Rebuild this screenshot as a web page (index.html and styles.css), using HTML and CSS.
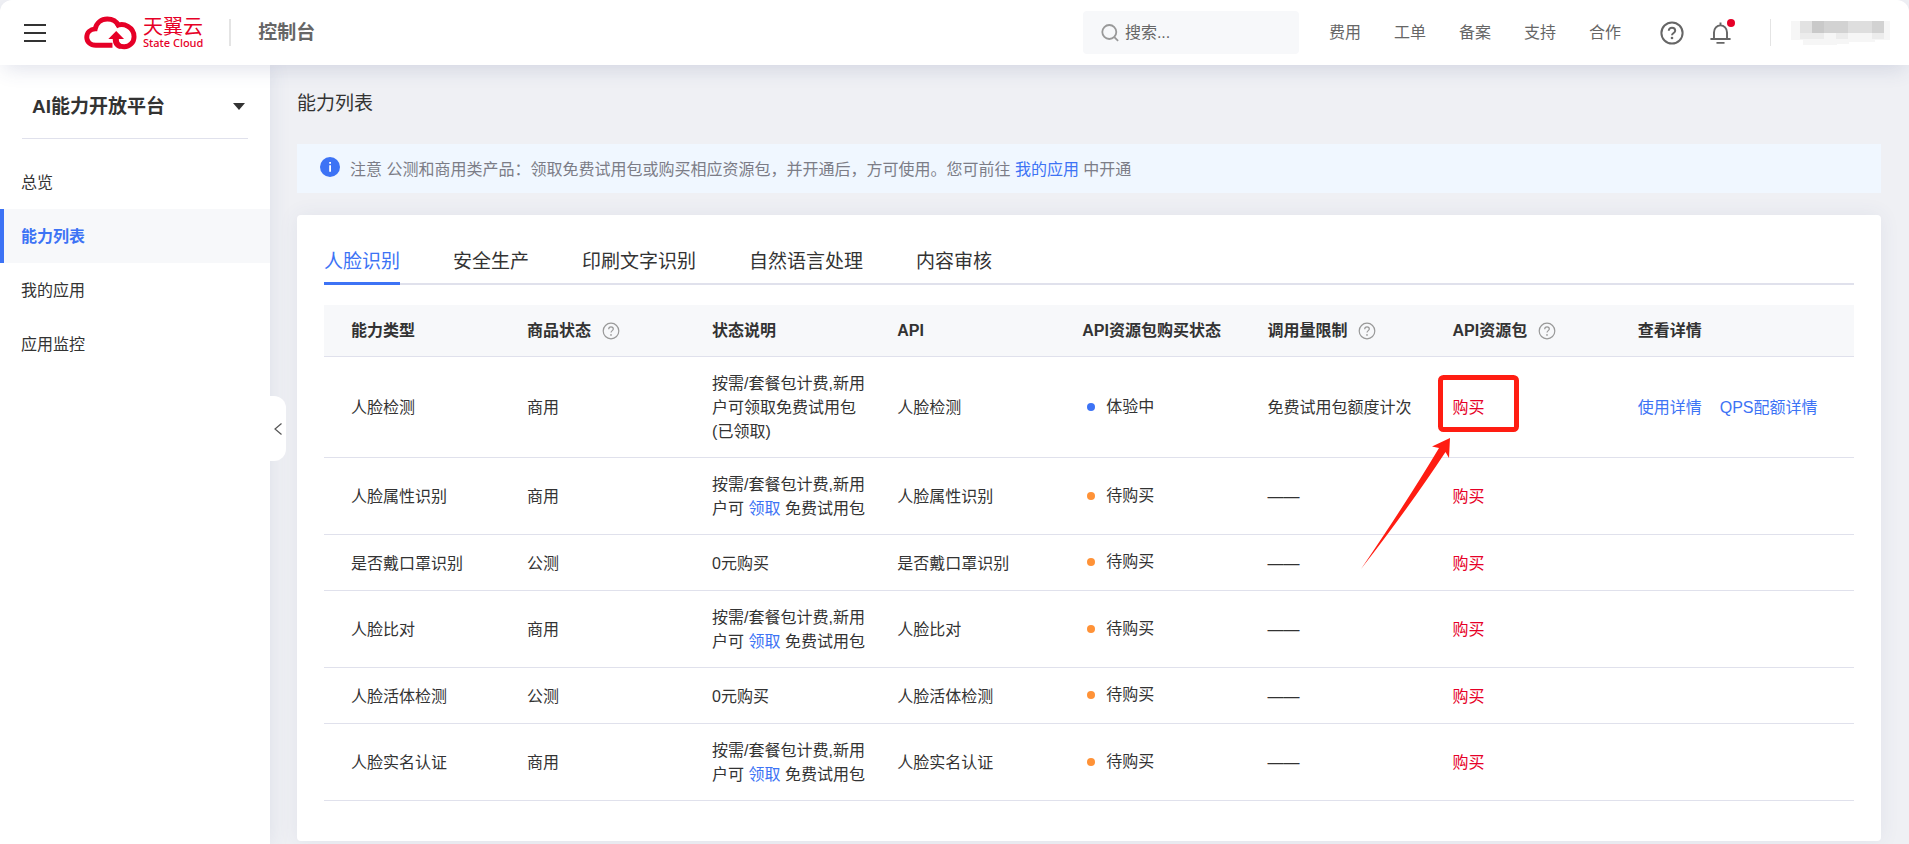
FILE: index.html
```html
<!DOCTYPE html>
<html lang="zh-CN">
<head>
<meta charset="utf-8">
<meta name="viewport" content="width=device-width, initial-scale=1">
<title>能力列表 - 控制台</title>
<link rel="stylesheet" href="styles.css">
</head>
<body>
<svg class="sprite" aria-hidden="true">
  <symbol id="icon-question" viewBox="0 0 18 18">
    <circle cx="9" cy="9" r="7.8" fill="none" stroke="currentColor" stroke-width="1.2"/>
    <path d="M6.7 7.2C6.7 5.7 7.7 4.9 9 4.9s2.3.8 2.3 2.1c0 1.600-2.300 1.700-2.300 3.600" fill="none" stroke="currentColor" stroke-width="1.2"/>
    <circle cx="9" cy="12.900" r=".85" fill="currentColor"/>
  </symbol>
</svg>
<header class="header">
  <button class="menu-button" type="button" aria-label="菜单"><span></span><span></span><span></span></button>
  <a class="logo" href="#">
    <svg class="logo-mark" viewBox="0 0 54 34" aria-hidden="true">
      <path d="M29 29.500H12C6.500 29.500 2.800 26 2.800 21.400c0-4.800 3.600-8.200 8.600-8.600C12.800 6.400 17.700 2.700 23.700 2.700c5.600 0 9.600 2.700 11.800 6.900" fill="none" stroke="currentColor" stroke-width="5"/>
      <path d="M32.500 10c8-4.500 18.500 1.500 18.500 10.700 0 5.800-4.400 10.300-10 10.300-5 0-8.600-3.300-8.600-8.500" fill="none" stroke="currentColor" stroke-width="5"/>
      <path d="M32.800 15l8 8.200h-5.400c0 3 1.300 5 4 6l-2.500 4.200c-2.900-.8-5-2.300-6.200-4.200-1-1.700-1.400-3.700-1.400-6h-4.500z" fill="currentColor"/>
    </svg>
    <span class="logo-text"><span class="logo-cn">天翼云</span><span class="logo-en">State Cloud</span></span>
  </a>
  <span class="divider"></span>
  <a class="console" href="#">控制台</a>
  <label class="search">
    <svg viewBox="0 0 18 18" aria-hidden="true"><circle cx="8.300" cy="8" r="7" fill="none" stroke="currentColor" stroke-width="1.800"/><path d="M13.300 13.200l3.800 3.600" stroke="currentColor" stroke-width="1.800"/></svg>
    <input type="search" placeholder="搜索..." aria-label="搜索">
  </label>
  <nav class="top-nav">
    <a href="#">费用</a><a href="#">工单</a><a href="#">备案</a><a href="#">支持</a><a href="#">合作</a>
  </nav>
  <button class="tool help" type="button" aria-label="帮助">
    <svg viewBox="0 0 24 24"><circle cx="12" cy="12" r="10.600" fill="none" stroke="currentColor" stroke-width="2"/><path d="M8.800 9.800C8.800 7.900 10.200 6.800 12 6.800s3.200 1.100 3.200 2.900c0 2.200-3.200 2.300-3.200 4.600" fill="none" stroke="currentColor" stroke-width="2"/><circle cx="12" cy="17" r="1.300" fill="currentColor"/></svg>
  </button>
  <button class="tool bell" type="button" aria-label="消息">
    <svg viewBox="0 0 24 24"><path d="M5.200 18.200V11.500a6.800 7.500 0 0 1 13.600 0v6.700M1.500 18.200h21M12 1v3M7.800 22.300h8.400" fill="none" stroke="currentColor" stroke-width="2"/></svg>
    <span class="badge"></span>
  </button>
  <span class="divider thin"></span>
  <svg class="account" viewBox="0 0 99 24" aria-label="账户" shape-rendering="crispEdges">
    <path fill="#f6f6f6" d="M0 0h99v19H84v2H58v2H46v1H12v-5H0z"/>
    <path fill="#e2e2e2" d="M9 0h12v12H9z"/><path fill="#c9c9c9" d="M21 0h12v12H21z"/>
    <path fill="#dedede" d="M33 0h60v12H33z"/><path fill="#d2d2d2" d="M33 0h24v12H33zM81 0h12v12H81z"/>
    <path fill="#ececec" d="M9 12h24v6H9zM45 12h12v6H45zM81 12h12v6H81z"/>
  </svg>
</header>
<div class="layout">
  <aside class="sidebar">
    <button class="product" type="button">AI能力开放平台<span class="caret"></span></button>
    <nav class="side-nav">
      <a href="#">总览</a>
      <a class="active" href="#" aria-current="page">能力列表</a>
      <a href="#">我的应用</a>
      <a href="#">应用监控</a>
    </nav>
    <button class="collapse" type="button" aria-label="收起"><svg viewBox="0 0 8 12"><path d="M7.500.5L1 6l6.500 5.500" fill="none" stroke="currentColor" stroke-width="1.200"/></svg></button>
  </aside>
  <main class="main">
    <h1>能力列表</h1>
    <div class="notice">
      <svg viewBox="0 0 20 20" aria-hidden="true"><circle cx="10" cy="10" r="10" fill="#3d73f5"/><path d="M9.200 8.200h1.800v6.600H9.200zM9.200 5h1.800v1.800H9.200z" fill="#fff"/></svg>
      <p>注意 公测和商用类产品：领取免费试用包或购买相应资源包，并开通后，方可使用。您可前往 <a href="#">我的应用</a> 中开通</p>
    </div>
    <section class="card">
      <div class="tabs" role="tablist">
        <button class="active" type="button" role="tab" aria-selected="true">人脸识别</button>
        <button type="button" role="tab">安全生产</button>
        <button type="button" role="tab">印刷文字识别</button>
        <button type="button" role="tab">自然语言处理</button>
        <button type="button" role="tab">内容审核</button>
      </div>
      <table>
        <colgroup><col class="col-type"><col class="col"><col class="col"><col class="col"><col class="col"><col class="col"><col class="col"><col></colgroup>
        <thead>
          <tr>
            <th>能力类型</th>
            <th><span class="hint">商品状态<svg><use href="#icon-question"/></svg></span></th>
            <th>状态说明</th>
            <th>API</th>
            <th>API资源包购买状态</th>
            <th><span class="hint">调用量限制<svg><use href="#icon-question"/></svg></span></th>
            <th><span class="hint">API资源包<svg><use href="#icon-question"/></svg></span></th>
            <th>查看详情</th>
          </tr>
        </thead>
        <tbody>
          <tr>
            <td>人脸检测</td><td>商用</td><td>按需/套餐包计费,新用户可领取免费试用包(已领取)</td><td>人脸检测</td>
            <td><span class="status trial">体验中</span></td><td>免费试用包额度计次</td>
            <td class="marked"><a class="buy" href="#">购买</a>
              <svg class="marker" viewBox="0 0 160 196" aria-hidden="true">
                <rect x="80.500" y="3.500" width="76" height="52" rx="3" fill="none" stroke="#ff1d12" stroke-width="5"/>
                <path d="M90 64L72 72.500l7 1.500Q48 126 1 195Q50 132 85.500 78l3.500 6z" fill="#ff1d12"/>
              </svg></td>
            <td><span class="links"><a href="#">使用详情</a><a href="#">QPS配额详情</a></span></td>
          </tr>
          <tr>
            <td>人脸属性识别</td><td>商用</td><td>按需/套餐包计费,新用户可 <a href="#">领取</a> 免费试用包</td><td>人脸属性识别</td>
            <td><span class="status">待购买</span></td><td>——</td><td><a class="buy" href="#">购买</a></td><td></td>
          </tr>
          <tr>
            <td>是否戴口罩识别</td><td>公测</td><td>0元购买</td><td>是否戴口罩识别</td>
            <td><span class="status">待购买</span></td><td>——</td><td><a class="buy" href="#">购买</a></td><td></td>
          </tr>
          <tr>
            <td>人脸比对</td><td>商用</td><td>按需/套餐包计费,新用户可 <a href="#">领取</a> 免费试用包</td><td>人脸比对</td>
            <td><span class="status">待购买</span></td><td>——</td><td><a class="buy" href="#">购买</a></td><td></td>
          </tr>
          <tr>
            <td>人脸活体检测</td><td>公测</td><td>0元购买</td><td>人脸活体检测</td>
            <td><span class="status">待购买</span></td><td>——</td><td><a class="buy" href="#">购买</a></td><td></td>
          </tr>
          <tr>
            <td>人脸实名认证</td><td>商用</td><td>按需/套餐包计费,新用户可 <a href="#">领取</a> 免费试用包</td><td>人脸实名认证</td>
            <td><span class="status">待购买</span></td><td>——</td><td><a class="buy" href="#">购买</a></td><td></td>
          </tr>
        </tbody>
      </table>
    </section>
  </main>
</div>
</body>
</html>
```
FILE: styles.css
```css
* { box-sizing: border-box; }

body {
  margin: 0;
  min-height: 100vh;
  display: flex;
  flex-direction: column;
  background: #eff0f4;
  color: #333;
  font: 16px/24px "Liberation Sans", "Noto Sans CJK SC", sans-serif;
}

a { color: #3d73f5; text-decoration: none; }

button {
  padding: 0;
  border: 0;
  background: none;
  color: inherit;
  font: inherit;
  cursor: pointer;
}

svg { display: block; flex: none; }
.sprite { position: absolute; width: 0; height: 0; }

.header {
  position: relative;
  z-index: 2;
  display: flex;
  align-items: center;
  height: 65px;
  padding: 0 19px 0 24px;
  background: #fff;
  border-radius: 12px 12px 0 0;
  box-shadow: 0 8px 20px -4px rgba(60, 75, 130, 0.16);
  color: #666;
}

.menu-button { display: grid; gap: 6px; width: 22px; margin-right: 38px; }
.menu-button span { height: 2px; background: #333; }

.logo { display: flex; align-items: center; gap: 6px; color: #e60027; }
.logo-mark { width: 53px; height: 34px; }
.logo-text { display: grid; }
.logo-cn { font-size: 20px; line-height: 20px; font-weight: 400; }
.logo-en { font: 500 11px/12px "Noto Sans", sans-serif; }

.divider { width: 2px; height: 27px; margin: 0 27px 0 26px; background: #e4e4e4; }
.divider.thin { width: 1px; margin: 0 20px 0 38px; }
.console { color: #666; font-size: 19px; font-weight: 700; }

.search {
  display: flex;
  align-items: center;
  gap: 6px;
  width: 216px;
  height: 43px;
  margin: 0 30px 0 auto;
  padding: 0 18px;
  border-radius: 4px;
  background: #f7f8fa;
  color: #999;
}
.search svg { width: 18px; height: 18px; }
.search input {
  flex: 1;
  min-width: 0;
  padding: 0;
  border: 0;
  outline: 0;
  background: none;
  color: #666;
  font: inherit;
}
.search input::placeholder { color: #666; opacity: 1; }

.top-nav { display: flex; gap: 33px; margin-right: 39px; }
.top-nav a { color: #666; }

.tool { position: relative; }
.tool svg { width: 24px; height: 24px; }
.bell { margin-left: 25px; }
.bell svg { width: 23px; }
.badge {
  position: absolute;
  top: -2px;
  right: -3px;
  width: 8px;
  height: 8px;
  border-radius: 50%;
  background: #e60027;
}
.account { width: 99px; height: 24px; }

.layout { flex: 1; display: flex; }

.sidebar { position: relative; flex: none; width: 270px; background: #fff; box-shadow: 0 0 20px rgba(60, 75, 130, 0.1); }
.product {
  display: flex;
  align-items: center;
  justify-content: space-between;
  width: 226px;
  height: 74px;
  margin: 0 22px 16px;
  padding: 10px 3px 0 10px;
  border-bottom: 1px solid #e0e1ec;
  font-size: 19px;
  font-weight: 700;
}
.caret { border: 6px solid transparent; border-top: 7px solid #333; border-bottom: 0; }

.side-nav a {
  display: block;
  padding: 16px 17px 14px;
  border-left: 4px solid transparent;
  color: #333;
}
.side-nav .active { border-color: #3d73f5; background: #f7f8fa; color: #3d73f5; font-weight: 700; }

.collapse {
  position: absolute;
  top: 331px;
  left: 100%;
  display: grid;
  place-items: center;
  width: 16px;
  height: 65px;
  border-radius: 0 12px 12px 0;
  background: #fff;
  color: #555;
}
.collapse svg { width: 8px; height: 12px; }

.main { flex: 1; min-width: 0; padding: 25px 28px 4px 27px; }
h1 { margin: 0 0 26px; font-size: 19px; line-height: 28px; font-weight: 400; }

.notice {
  display: flex;
  gap: 10px;
  margin-bottom: 22px;
  padding: 13px 23px 11px;
  background: #f0f7ff;
  color: #7c7d87;
}
.notice svg { width: 20px; height: 20px; }
.notice p { margin: 0; padding-top: 1px; }

.card {
  padding: 28px 27px 40px;
  border-radius: 4px;
  background: #fff;
  box-shadow: 0 0 20px rgba(60, 75, 130, 0.08);
}

.tabs { display: flex; gap: 53px; margin-bottom: 20px; box-shadow: inset 0 -2px #e0e1ec; }
.tabs button { height: 42px; padding-bottom: 1px; font-size: 19px; line-height: 28px; border-bottom: 3px solid transparent; }
.tabs .active { border-color: #3d73f5; color: #3d73f5; }

table { width: 100%; table-layout: fixed; border-collapse: separate; border-spacing: 0; }
.col-type { width: 11.5%; }
.col { width: 12.1%; }
th, td {
  padding: 14px 0 14px 27px;
  border-bottom: 1px solid #e0e1ec;
  text-align: left;
  vertical-align: middle;
}
th { height: 52px; padding-top: 13px; padding-bottom: 13px; background: #f7f8fa; white-space: nowrap; }
td { padding-top: 15px; padding-bottom: 13px; }
td a { display: inline-block; }
.hint { display: flex; align-items: center; gap: 11px; }
.hint svg { width: 18px; height: 18px; color: #999; }

.status { display: flex; align-items: center; gap: 11px; padding: 0 0 3px 5px; }
.status::before { content: ""; width: 8px; height: 8px; border-radius: 50%; background: #ff9237; }
.trial::before { background: #3d73f5; }

.buy { color: #e60027; }
.links { display: flex; gap: 18px; white-space: nowrap; }

.marked { position: relative; }
.marker { position: absolute; top: 17px; left: -66px; width: 160px; height: 196px; pointer-events: none; }
```
